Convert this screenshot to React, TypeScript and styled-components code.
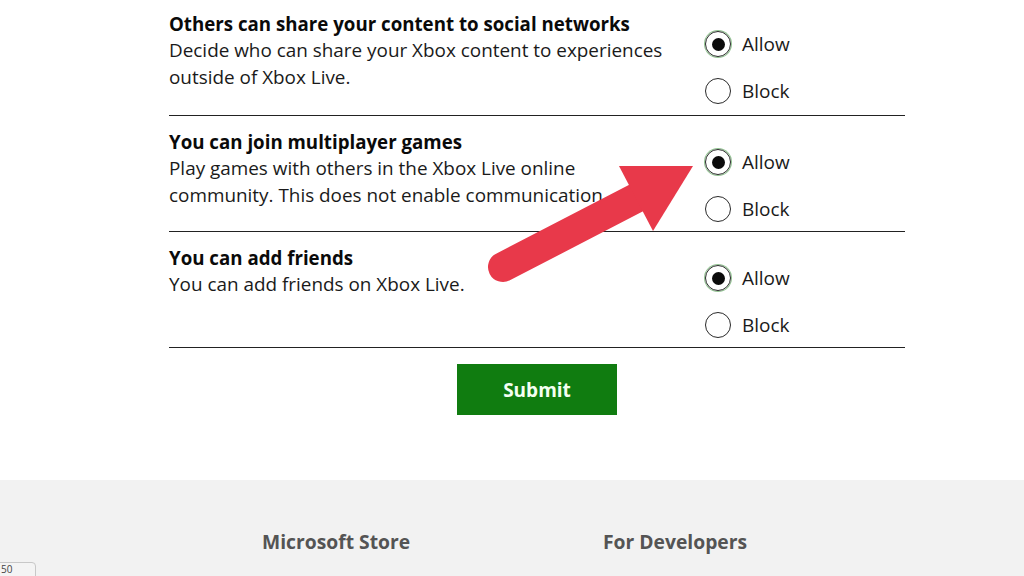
import React from "react";
import styled, { createGlobalStyle } from "styled-components";

const Global = createGlobalStyle`
  html, body { margin: 0; padding: 0; background: #fff; }
  body { font-family: "Open Sans", "Noto Sans", sans-serif; color: #111; overflow: hidden; }
  #root { width: 1024px; height: 576px; position: relative; overflow: hidden; }
`;

const Page = styled.div`
  width: 1024px;
  height: 576px;
  display: flex;
  flex-direction: column;
  position: relative;
  overflow: hidden;
`;

const Content = styled.div`
  width: 736px;
  margin: 0 0 0 169px;
  display: flex;
  flex-direction: column;
`;

const Row = styled.div`
  display: grid;
  grid-template-columns: 536px 1fr;
  height: 115px;
  border-bottom: 1.6px solid #222;
`;

const TextCol = styled.div<{ $first?: boolean }>`
  padding-top: ${(p) => (p.$first ? 10 : 12)}px;
  display: flex;
  flex-direction: column;
`;

const Title = styled.div`
  font-weight: 700;
  font-size: 18.7px;
  line-height: 27px;
  color: #0a0a0a;
  white-space: nowrap;
`;

const Line = styled.div`
  font-size: 18.9px;
  line-height: 27px;
  color: #1a1a1a;
  white-space: nowrap;
`;

const Options = styled.div<{ $first?: boolean }>`
  display: flex;
  flex-direction: column;
  padding-top: ${(p) => (p.$first ? 31 : 33)}px;
  gap: 21px;
`;

const Option = styled.label`
  display: flex;
  align-items: center;
  gap: 11px;
  height: 26px;
  font-size: 19px;
  color: #1a1a1a;
`;

const Radio = styled.span<{ $on?: boolean }>`
  width: 26px;
  height: 26px;
  box-sizing: border-box;
  border-radius: 50%;
  border: 1.6px solid #2a2a2a;
  display: flex;
  align-items: center;
  justify-content: center;
  box-shadow: ${(p) => (p.$on ? "0 0 0 1px rgba(16,124,16,0.45)" : "none")};
  &::after {
    content: "";
    width: 13px;
    height: 13px;
    border-radius: 50%;
    background: #0b0b0b;
    display: ${(p) => (p.$on ? "block" : "none")};
  }
`;

const ButtonRow = styled.div`
  display: flex;
  justify-content: center;
  align-items: flex-start;
  padding-top: 16px;
  height: 132px;
  box-sizing: border-box;
`;

const Submit = styled.button`
  width: 160px;
  height: 51px;
  border: none;
  background: #107c10;
  color: #f4fff2;
  font-family: "Open Sans", "Noto Sans", sans-serif;
  font-weight: 700;
  font-size: 19px;
  cursor: pointer;
`;

const Footer = styled.footer`
  flex: 1;
  background: #f2f2f2;
  display: flex;
  padding: 50px 0 0 262px;
`;

const FooterHead = styled.div<{ $w: number }>`
  width: ${(p) => p.$w}px;
  font-weight: 700;
  font-size: 19.3px;
  line-height: 24px;
  color: #545454;
`;

const ZoomTag = styled.div`
  position: absolute;
  left: -4px;
  top: 562px;
  width: 40px;
  height: 18px;
  box-sizing: border-box;
  border: 1px solid #c8c8c8;
  border-radius: 4px;
  background: #f4f4f4;
  font-size: 10px;
  color: #444;
  padding-left: 4px;
  line-height: 12px;
`;

const ArrowSvg = styled.svg`
  position: absolute;
  left: 0;
  top: 0;
  pointer-events: none;
`;

const rows = [
  {
    title: "Others can share your content to social networks",
    lines: ["Decide who can share your Xbox content to experiences", "outside of Xbox Live."],
  },
  {
    title: "You can join multiplayer games",
    lines: ["Play games with others in the Xbox Live online", "community. This does not enable communication."],
  },
  {
    title: "You can add friends",
    lines: ["You can add friends on Xbox Live."],
  },
];

export default function App() {
  return (
    <>
      <Global />
      <Page>
        <Content>
          {rows.map((r, i) => (
            <Row key={r.title}>
              <TextCol $first={i === 0}>
                <Title>{r.title}</Title>
                {r.lines.map((l) => (
                  <Line key={l}>{l}</Line>
                ))}
              </TextCol>
              <Options $first={i === 0}>
                <Option>
                  <Radio $on />
                  Allow
                </Option>
                <Option>
                  <Radio />
                  Block
                </Option>
              </Options>
            </Row>
          ))}
          <ButtonRow>
            <Submit>Submit</Submit>
          </ButtonRow>
        </Content>
        <Footer>
          <FooterHead $w={341}>Microsoft Store</FooterHead>
          <FooterHead $w={200}>For Developers</FooterHead>
        </Footer>
        <ZoomTag>50</ZoomTag>
        <ArrowSvg width="1024" height="576" viewBox="0 0 1024 576">
          <line x1="503" y1="267" x2="640" y2="196" stroke="#e8394a" strokeWidth="30" strokeLinecap="round" />
          <polygon points="619,166 693,166 653,231" fill="#e8394a" />
        </ArrowSvg>
      </Page>
    </>
  );
}
